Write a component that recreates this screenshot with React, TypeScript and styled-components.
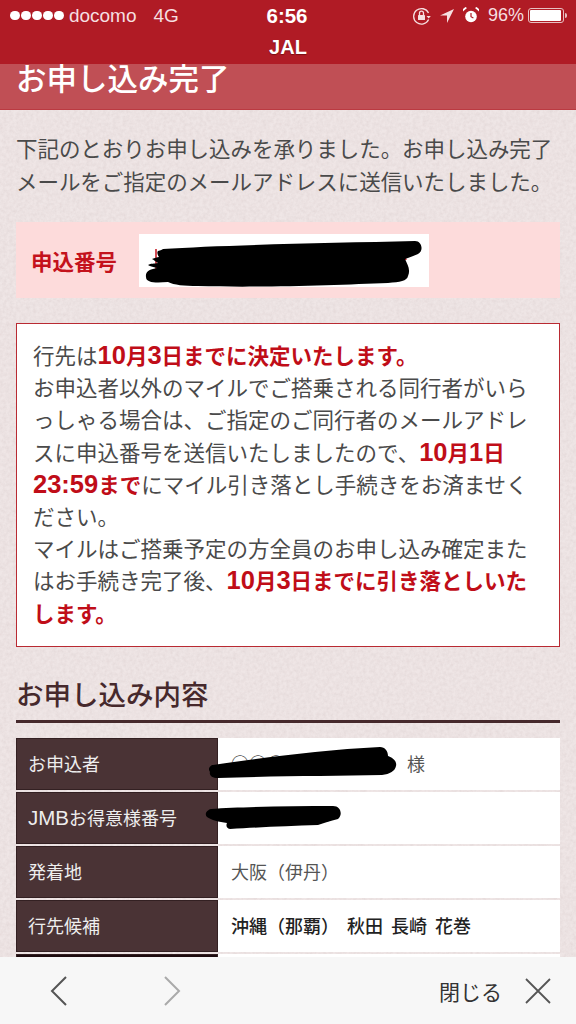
import React from 'react';
import styled, { createGlobalStyle } from 'styled-components';

const paper = `url("data:image/svg+xml,%3Csvg xmlns='http://www.w3.org/2000/svg' width='300' height='300'%3E%3Cfilter id='n'%3E%3CfeTurbulence type='fractalNoise' baseFrequency='0.3' numOctaves='3' stitchTiles='stitch'/%3E%3CfeColorMatrix values='0 0 0 0 0.6 0 0 0 0 0.5 0 0 0 0 0.5 0 0 0 0.45 -0.13'/%3E%3C/filter%3E%3Crect width='300' height='300' filter='url(%23n)'/%3E%3C/svg%3E")`;

const GlobalStyle = createGlobalStyle`
  html, body {
    margin: 0;
    padding: 0;
    height: 100%;
  }
  body {
    font-family: "Liberation Sans", "Noto Sans CJK JP", sans-serif;
    color: #444;
  }
`;

const Screen = styled.div`
  width: 576px;
  height: 1024px;
  display: flex;
  flex-direction: column;
  overflow: hidden;
  background: #efe6e6 ${paper};
`;

const Header = styled.header`
  height: 64px;
  flex: none;
  background: #b01b25;
  color: #fff;
  display: flex;
  flex-direction: column;
`;

const StatusBar = styled.div`
  height: 33px;
  box-sizing: border-box;
  padding: 0 12px 2px 10px;
  display: grid;
  grid-template-columns: 1fr auto 1fr;
  align-items: center;
  font-size: 19px;
  color: #f6dfe0;
`;

const StatusLeft = styled.div`
  display: flex;
  align-items: center;
`;

const Signal = styled.div`
  display: flex;
  gap: 1.6px;
  margin-right: 5px;
`;

const Dot = styled.span`
  width: 9.5px;
  height: 9.5px;
  border-radius: 50%;
  background: #fff;
`;

const Network = styled.span`
  margin-left: 17px;
`;

const Clock = styled.div`
  font-weight: 700;
  font-size: 20.5px;
  color: #fff;
`;

const StatusRight = styled.div`
  display: flex;
  align-items: center;
  justify-content: flex-end;
  gap: 9px;
  font-size: 18px;
`;

const Battery = styled.div`
  width: 32px;
  height: 11px;
  margin-left: -5px;
  border: 1px solid #e7c0c2;
  border-radius: 3px;
  padding: 1px;
  box-sizing: content-box;
  position: relative;
  &::before {
    content: '';
    display: block;
    height: 100%;
    width: 96%;
    background: #fff;
    border-radius: 1px;
  }
  &::after {
    content: '';
    position: absolute;
    right: -4px;
    top: 4px;
    width: 2px;
    height: 5px;
    background: #e7c0c2;
    border-radius: 0 2px 2px 0;
  }
`;

const NavTitle = styled.div`
  text-align: center;
  font-size: 20px;
  font-weight: 700;
  line-height: 28px;
  text-shadow: 0 1px 1px rgba(70, 0, 0, 0.5);
`;

const Main = styled.main`
  flex: 1;
  min-height: 0;
  overflow: hidden;
`;

const TitleBand = styled.h1`
  margin: 0;
  height: 45px;
  padding-left: 16px;
  background: #c04f55;
  border-bottom: 1px solid #bb3a41;
  color: #fff;
  font-size: 30.5px;
  font-weight: 500;
  line-height: 30px;
`;

const Body = styled.div`
  padding: 24px 16px 0;
`;

const Intro = styled.p`
  margin: 0 0 23px;
  width: 544px;
  font-size: 21.5px;
  line-height: 32.5px;
  letter-spacing: -0.05px;
  color: #4a4a4a;
`;

const NumberPanel = styled.div`
  height: 76px;
  background: #fddbdb;
  display: flex;
  align-items: center;
  padding-left: 15px;
  gap: 22px;
`;

const NumberLabel = styled.div`
  color: #c4121c;
  font-size: 21.5px;
  font-weight: 700;
`;

const NumberValue = styled.div`
  width: 290px;
  height: 53px;
  background: #fff;
  position: relative;
`;

const Scribble = styled.svg`
  position: absolute;
  overflow: visible;
`;

const Notice = styled.div`
  margin-top: 25px;
  background: #fff;
  border: 1px solid #b92a32;
  padding: 17px 26px 15px 16px;
  font-size: 21.5px;
  line-height: 32.2px;
  color: #4a4a4a;
`;

const Strong = styled.b`
  color: #c00d18;
`;

const Latin = styled.span<{ $size: number }>`
  font-size: ${(p) => p.$size}px;
  line-height: 0;
`;

const SectionTitle = styled.h2`
  margin: 27px 0 0;
  padding-bottom: 2px;
  border-bottom: 3px solid #46292c;
  font-size: 27.5px;
  line-height: 44px;
  font-weight: 500;
  color: #46292c;
`;

const InfoTable = styled.div`
  margin-top: 15px;
  display: grid;
  grid-template-columns: 202px 1fr;
  grid-auto-rows: 52px;
  row-gap: 2px;
`;

const Th = styled.div<{ $shaded?: boolean }>`
  background: ${(p) => (p.$shaded ? '#1d0b0e' : '#4a3335')};
  box-shadow: inset 0 0 0 1px #332022;
  color: #eee;
  display: flex;
  align-items: center;
  padding: 0 0 2px 12px;
  font-size: 18px;
`;

const Td = styled.div<{ $bold?: boolean }>`
  background: #fff;
  display: flex;
  align-items: center;
  padding: 0 0 2px 13px;
  font-size: 18px;
  color: ${(p) => (p.$bold ? '#222' : '#555')};
  font-weight: ${(p) => (p.$bold ? 500 : 400)};
  word-spacing: ${(p) => (p.$bold ? '3px' : '0')};
  position: relative;
  white-space: pre;
`;

const Masked = styled.span`
  margin-right: 14px;
  font-family: "Noto Sans CJK JP", sans-serif;
`;

const ToolBar = styled.footer`
  height: 67px;
  flex: none;
  background: #f7f7f7;
  display: flex;
  align-items: center;
  padding: 0 25px 0 50px;
`;

const NavIcons = styled.div`
  display: flex;
  gap: 97px;
`;

const Close = styled.div`
  margin-left: auto;
  display: flex;
  align-items: center;
  gap: 23px;
  font-size: 21px;
  color: #333;
`;

const Blot = ({ d, w, h, style }: { d: string; w: number; h: number; style: React.CSSProperties }) => (
  <Scribble width={w} height={h} viewBox={`0 0 ${w} ${h}`} style={style}>
    <path d={d} fill="#000" />
  </Scribble>
);

export default function App() {
  return (
    <Screen>
      <GlobalStyle />
      <Header>
        <StatusBar>
          <StatusLeft>
            <Signal>
              <Dot /><Dot /><Dot /><Dot /><Dot />
            </Signal>
            docomo
            <Network>4G</Network>
          </StatusLeft>
          <Clock>6:56</Clock>
          <StatusRight>
            <svg width="18" height="18" viewBox="0 0 18 18" fill="none" stroke="#f6dfe0" strokeWidth="1.3">
              <path d="M15.5 6A7.8 7.8 0 1 0 15.6 12.500" />
              <path d="M13.500 9h4.300l-2.100 2.600z" fill="#f6dfe0" stroke="none" />
              <rect x="5" y="8" width="7" height="5" rx=".6" fill="#f6dfe0" stroke="none" />
              <path d="M6.500 8V6.200a2 2 0 0 1 4 0V8" />
            </svg>
            <svg width="14" height="14" viewBox="0 0 14 14">
              <path d="M14 0 0 6.600h7V14z" fill="#f6dfe0" />
            </svg>
            <svg width="16" height="17" viewBox="0 0 16 17">
              <circle cx="8" cy="9.500" r="5.800" fill="#fff" />
              <path d="M8 6v3.700l2.400 1.300" fill="none" stroke="#b01b25" strokeWidth="1.200" />
              <path d="M0 4.600 4 1 2.400 0 0 2zM16 4.600 12 1l1.600-1L16 2z" fill="#fff" />
            </svg>
            <span>96%</span>
            <Battery />
          </StatusRight>
        </StatusBar>
        <NavTitle>JAL</NavTitle>
      </Header>

      <Main>
        <TitleBand>お申し込み完了</TitleBand>
        <Body>
          <Intro>
            下記のとおりお申し込みを承りました。お申し込み完了メールをご指定のメールアドレスに送信いたしました。
          </Intro>

          <NumberPanel>
            <NumberLabel>申込番号</NumberLabel>
            <NumberValue>
              <Scribble width="290" height="53" viewBox="0 0 290 53" style={{ left: 0, top: 0 }}>
                <path d="M17 15v20M264 17l3 9" stroke="#c4121c" strokeWidth="1.5" fill="none" />
              </Scribble>
              <Blot
                w={290}
                h={53}
                style={{ left: 0, top: 0 }}
                d="M24 15C80 11 190 9 276 7c7 0 9 10 3 13-4 2-8 3-13 5 2 5 6 10 3 17-1 5-8 6-20 7-50 2-130 5-190 3-14 0-24-1-30-4-12 1-22 1-22-5-1-6 5-8 11-9-4-1-8-2-9-3 3-2 6-1 10-2-3-2-4-3-6-4 3-1 5-2 7-2-2-3-2-5-1-6 3-1 4-1 5-2z"
              />
            </NumberValue>
          </NumberPanel>

          <Notice>
            行先は<Strong><Latin $size={25.5}>10</Latin>月<Latin $size={25.5}>3</Latin>日までに決定いたします。</Strong>
            <br />
            お申込者以外のマイルでご搭乗される同行者がいらっしゃる場合は、ご指定のご同行者のメールアドレスに申込番号を送信いたしましたので、
            <Strong><Latin $size={25.5}>10</Latin>月<Latin $size={25.5}>1</Latin>日<Latin $size={25.5}>23:59</Latin>まで</Strong>
            にマイル引き落とし手続きをお済ませください。
            <br />
            マイルはご搭乗予定の方全員のお申し込み確定またはお手続き完了後、
            <Strong><Latin $size={25.5}>10</Latin>月<Latin $size={25.5}>3</Latin>日までに引き落としいたします。</Strong>
          </Notice>

          <SectionTitle>お申し込み内容</SectionTitle>
          <InfoTable>
            <Th>お申込者</Th>
            <Td>
              <Masked>○○○○○○○○○</Masked>様
              <Blot
                w={186}
                h={32}
                style={{ left: -8, top: 8 }}
                d="M3 19C50 12 110 4 170 1c5 0 8 4 8 9 6 2 9 6 8 10-1 5-6 8-14 9-50 1-110 1-164 3-6 0-9-3-8-6-2-3-1-5 2-7z"
              />
            </Td>
            <Th><span><Latin $size={20.5}>JMB</Latin>お得意様番号</span></Th>
            <Td>
              0000000000
              <Blot
                w={134}
                h={24}
                style={{ left: -10, top: 14 }}
                d="M3 3c30-2 80-3 122-3 8 0 10 9 5 13-8 2-14 4-20 6-30 1-55 2-88 4-4-1-4-4-3-6-8-1-16-3-20-6-3-3 0-7 4-8z"
              />
            </Td>
            <Th>発着地</Th>
            <Td>大阪（伊丹）</Td>
            <Th>行先候補</Th>
            <Td $bold>沖縄（那覇） 秋田 長崎 花巻</Td>
            <Th $shaded />
            <Td />
          </InfoTable>
        </Body>
      </Main>

      <ToolBar>
        <NavIcons>
          <svg width="17" height="30" viewBox="0 0 17 30" fill="none" stroke="#555" strokeWidth="2">
            <path d="M16 1 2 15l14 14" />
          </svg>
          <svg width="17" height="30" viewBox="0 0 17 30" fill="none" stroke="#aaa" strokeWidth="2">
            <path d="M1 1l14 14L1 29" />
          </svg>
        </NavIcons>
        <Close>
          閉じる
          <svg width="26" height="26" viewBox="0 0 26 26" fill="none" stroke="#555" strokeWidth="1.8">
            <path d="M1 1l24 24M25 1 1 25" />
          </svg>
        </Close>
      </ToolBar>
    </Screen>
  );
}
